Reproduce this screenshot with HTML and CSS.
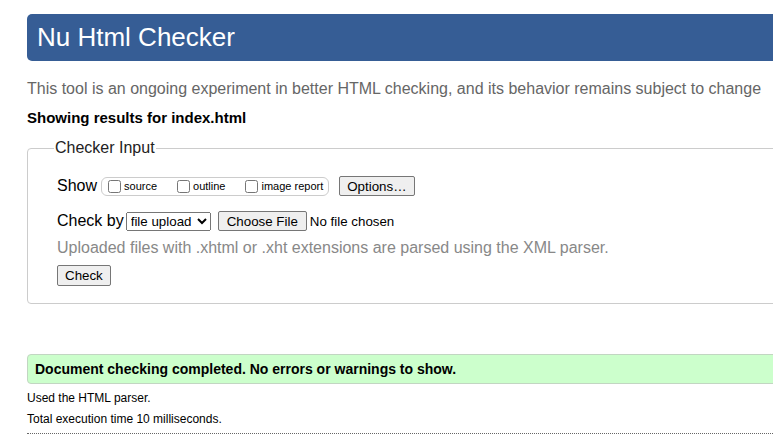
FILE: index.html
```html
<!DOCTYPE html>
<html lang="en">
<head>
<meta charset="utf-8">
<title>Nu Html Checker</title>
<link rel="stylesheet" href="styles.css">
</head>
<body>
<div class="page">
  <h1 class="title">Nu Html Checker</h1>
  <p class="about">This tool is an ongoing experiment in better HTML checking, and its behavior remains subject to change</p>
  <p class="showing">Showing results for index.html</p>
  <fieldset class="input">
    <legend class="legend">Checker Input</legend>
    <div class="row show-row">
      <span class="lbl">Show</span>
      <span class="opts">
        <label class="opt"><input type="checkbox" class="cb">source</label>
        <label class="opt"><input type="checkbox" class="cb">outline</label>
        <label class="opt"><input type="checkbox" class="cb">image report</label>
      </span>
      <button class="btn options" type="button">Options…</button>
    </div>
    <div class="row check-row">
      <span class="lbl">Check by</span>
      <select class="sel"><option>file upload</option></select>
      <span class="file"><button class="btn choose" type="button">Choose File</button><span class="nofile">No file chosen</span></span>
    </div>
    <p class="note">Uploaded files with .xhtml or .xht extensions are parsed using the XML parser.</p>
    <button class="btn check" type="button">Check</button>
  </fieldset>
  <p class="success">Document checking completed. No errors or warnings to show.</p>
  <p class="info">Used the HTML parser.</p>
  <p class="info">Total execution time 10 milliseconds.</p>
  <hr class="dots">
</div>
</body>
</html>
```
FILE: styles.css
```css
html { overflow: hidden; }
body {
  margin: 0;
  font-family: "Liberation Sans", Arial, sans-serif;
  color: #000;
  background: #fff;
}
.page {
  margin-left: 27px;
  width: 830px;
  padding-top: 14px;
}
.title {
  margin: 0;
  height: 47px;
  line-height: 47px;
  padding-left: 10px;
  background: #365d95;
  color: #fff;
  font-size: 26px;
  font-weight: normal;
  border-radius: 5px;
}
.about {
  margin: 18px 0 0;
  font-size: 16px;
  color: #666;
  line-height: 19px;
}
.showing {
  margin: 11px 0 0;
  font-size: 15px;
  font-weight: bold;
  line-height: 18px;
}
.input {
  margin: 12px 0 0;
  padding: 10px 29px 17px;
  border: 1px solid #ccc;
  border-radius: 4px;
}
.legend {
  font-size: 16px;
  color: #222;
  padding: 0 1px;
  margin-left: -3px;
}
.row {
  display: flex;
  align-items: center;
  font-size: 16px;
}
.show-row { height: 22px; margin-top: 8px; }
.lbl { margin-right: 4px; }
.check-row .lbl { margin-right: 2px; }
.opts {
  display: inline-flex;
  align-items: center;
  border: 1px solid #ccc;
  border-radius: 6px;
  height: 17px;
  padding: 0 5px 0 6px;
  font-size: 11px;
}
.opt {
  display: inline-flex;
  align-items: center;
  margin-right: 20px;
}
.opt:last-child { margin-right: 0; }
.cb { margin: 0 3px 0 0; width: 13px; height: 13px; }
.btn {
  font-family: "Liberation Sans", Arial, sans-serif;
  font-size: 13.33px;
  padding: 1px 7px;
  margin: 0;
  border: 1px solid #767676;
  border-radius: 2px;
  background: #efefef;
  color: #000;
}
.options { margin-left: 10px; height: 20px; }
.check-row { margin-top: 13px; height: 22px; }
.sel {
  font-family: "Liberation Sans", Arial, sans-serif;
  font-size: 13.33px;
  height: 19px;
  width: 85px;
  margin: 0 7px 0 0;
}
.file { display: inline-flex; align-items: center; font-size: 13.33px; }
.choose { height: 20px; padding: 1px 8px; }
.nofile { margin-left: 3px; }
.note {
  margin: 6px 0 0;
  font-size: 16px;
  color: #888;
  line-height: 19px;
}
.check { margin-top: 8px; height: 21px; }
.success {
  margin: 50px 0 0;
  padding: 0 7px;
  height: 28px;
  line-height: 28px;
  background: #ccffcc;
  border: 1px solid #c2d6c2;
  border-radius: 4px;
  font-size: 14px;
  font-weight: bold;
}
.info {
  margin: 7px 0 0;
  font-size: 12px;
  line-height: 14px;
}
.dots {
  margin: 7px 0 0;
  border: 0;
  border-top: 1px dotted #666;
  height: 0;
}
```
